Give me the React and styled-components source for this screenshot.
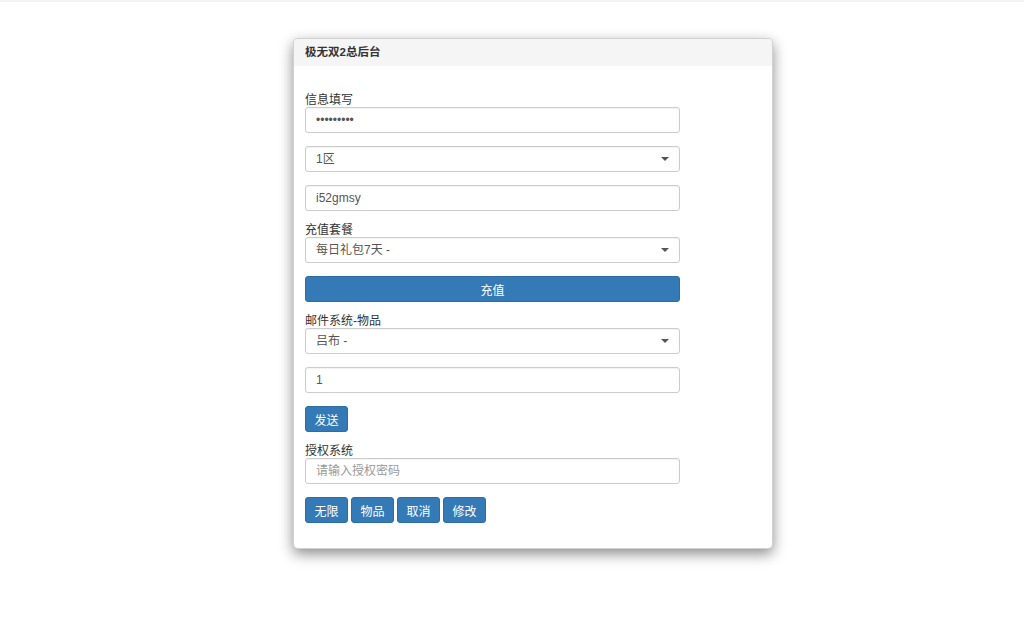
import React from 'react';
import styled, { createGlobalStyle } from 'styled-components';

const GlobalStyle = createGlobalStyle`
  html, body {
    margin: 0;
    padding: 0;
    background: #fff;
  }
  body {
    font-family: "Liberation Sans", "Noto Sans CJK SC", sans-serif;
    font-size: 12px;
    color: #333;
  }
`;

const Page = styled.div`
  border-top: 2px solid #f3f3f3;
  padding-top: 36px;
  min-height: 600px;
`;

const Panel = styled.div`
  width: 478px;
  margin-left: 293px;
  background: #fff;
  border: 1px solid rgba(0, 0, 0, 0.18);
  border-radius: 5px;
  box-shadow: 0 5px 14px rgba(0, 0, 0, 0.45);
  overflow: hidden;
`;

const Header = styled.div`
  height: 27px;
  line-height: 27px;
  padding: 0 11px;
  background: #f5f5f5;
  font-weight: bold;
  font-size: 11.5px;
  color: #333;
`;

const Body = styled.div`
  padding: 28px 11px 25px;
  display: flex;
  flex-direction: column;
  gap: 13px;
`;

const Group = styled.div`
  display: flex;
  flex-direction: column;
`;

const Label = styled.label`
  display: block;
  height: 13px;
  line-height: 13px;
  font-size: 12px;
  color: #333;
`;

const Input = styled.input`
  box-sizing: border-box;
  width: 375px;
  height: 26px;
  padding: 0 10px;
  border: 1px solid #ccc;
  border-radius: 3px;
  font-family: inherit;
  font-size: 12px;
  color: #555;
  background: #fff;
  box-shadow: inset 0 1px 1px rgba(0, 0, 0, 0.05);
  outline: none;

  &::placeholder {
    color: #999;
  }
`;

const SelectWrap = styled.div`
  position: relative;
  width: 375px;
`;

const Select = styled.select`
  box-sizing: border-box;
  width: 100%;
  height: 26px;
  padding: 0 10px;
  border: 1px solid #ccc;
  border-radius: 3px;
  font-family: inherit;
  font-size: 12px;
  color: #555;
  background: #fff;
  appearance: none;
  -webkit-appearance: none;
  box-shadow: inset 0 1px 1px rgba(0, 0, 0, 0.05);
  outline: none;
`;

const Caret = styled.span`
  position: absolute;
  right: 11px;
  top: 11px;
  width: 0;
  height: 0;
  border-left: 4px solid transparent;
  border-right: 4px solid transparent;
  border-top: 4px solid #555;
  pointer-events: none;
`;

const Button = styled.button`
  box-sizing: border-box;
  height: 26px;
  width: ${(p) => (p.block ? '375px' : '43px')};
  padding: 0;
  border: 1px solid #2e6da4;
  border-radius: 3px;
  background: #337ab7;
  color: #fff;
  font-family: inherit;
  font-size: 12px;
  cursor: pointer;
`;

const ButtonRow = styled.div`
  display: flex;
  gap: 3px;
`;

const Dropdown = ({ value }) => (
  <SelectWrap>
    <Select defaultValue={value}>
      <option>{value}</option>
    </Select>
    <Caret />
  </SelectWrap>
);

export default function App() {
  return (
    <>
      <GlobalStyle />
      <Page>
        <Panel>
          <Header>极无双2总后台</Header>
          <Body>
            <Group>
              <Label>信息填写</Label>
              <Input type="password" defaultValue="abcdefghi" />
            </Group>
            <Dropdown value="1区" />
            <Input defaultValue="i52gmsy" />
            <Group>
              <Label>充值套餐</Label>
              <Dropdown value="每日礼包7天 -" />
            </Group>
            <ButtonRow>
              <Button block>充值</Button>
            </ButtonRow>
            <Group>
              <Label>邮件系统-物品</Label>
              <Dropdown value="吕布 -" />
            </Group>
            <Input defaultValue="1" />
            <ButtonRow>
              <Button>发送</Button>
            </ButtonRow>
            <Group>
              <Label>授权系统</Label>
              <Input placeholder="请输入授权密码" />
            </Group>
            <ButtonRow>
              <Button>无限</Button>
              <Button>物品</Button>
              <Button>取消</Button>
              <Button>修改</Button>
            </ButtonRow>
          </Body>
        </Panel>
      </Page>
    </>
  );
}
